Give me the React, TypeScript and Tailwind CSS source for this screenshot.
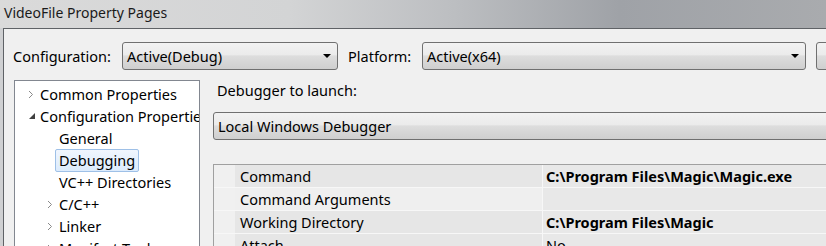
import React from "react";

const Arrow = () => (
  <svg width="9" height="5" viewBox="0 0 9 5" className="shrink-0">
    <path d="M0 0 H8 L4 4 Z" fill="#000" />
  </svg>
);

const Combo = ({ text, className }: { text: string; className: string }) => (
  <div
    className={`flex items-center justify-between rounded-[3px] border border-[#707070] bg-[linear-gradient(#f2f2f2_0%,#ebebeb_45%,#dddddd_50%,#cfcfcf_100%)] pl-[4px] pr-[5px] ${className}`}
  >
    <span className="text-[14.5px] leading-none text-[#000]">{text}</span>
    <Arrow />
  </div>
);

const Chevron = () => (
  <svg width="6" height="9" viewBox="0 0 6 9" className="shrink-0">
    <path d="M1 1 L4.5 4.5 L1 8" fill="none" stroke="#8a8a8a" strokeWidth="1" />
  </svg>
);

const Expanded = () => (
  <svg width="8" height="8" viewBox="0 0 8 8" className="shrink-0">
    <path d="M7 1 L7 7 L1 7 Z" fill="#404040" />
  </svg>
);

type TreeItem = { label: string; indent: number; icon?: "c" | "e"; selected?: boolean };

const tree: TreeItem[] = [
  { label: "Common Properties", indent: 0, icon: "c" },
  { label: "Configuration Properties", indent: 0, icon: "e" },
  { label: "General", indent: 1 },
  { label: "Debugging", indent: 1, selected: true },
  { label: "VC++ Directories", indent: 1 },
  { label: "C/C++", indent: 1, icon: "c" },
  { label: "Linker", indent: 1, icon: "c" },
  { label: "Manifest Tool", indent: 1, icon: "c" },
];

const rows = [
  { name: "Command", value: "C:\\Program Files\\Magic\\Magic.exe", light: false },
  { name: "Command Arguments", value: "", light: true },
  { name: "Working Directory", value: "C:\\Program Files\\Magic", light: false },
  { name: "Attach", value: "No", light: false, normal: true },
];

export default function App() {
  return (
    <div
      className="relative h-[246px] w-[826px] overflow-hidden bg-[#c9cbcf] text-[#000]"
      style={{ fontFamily: '"Noto Sans", "Open Sans", sans-serif' }}
    >
      {/* title bar */}
      <div className="flex h-[28px] items-center bg-[linear-gradient(180deg,rgba(60,64,72,0)_0%,rgba(60,64,72,0)_100%),linear-gradient(90deg,#dadada_0%,#d3d4d5_35%,#bcbec1_55%,#9fa2a7_75%,#a9abae_100%)] pb-[3px] pl-[4px]">
        <span className="text-[14px] leading-none text-[#1a1a1a]">VideoFile Property Pages</span>
      </div>
      <div className="flex">
        <div className="w-[3px] shrink-0 bg-[#cfd0d2]" />
        <div className="h-[218px] flex-1 border-l border-t border-[#5f6266] bg-[#f0f0f0]">
          {/* top config row */}
          <div className="flex items-center pt-[13px]">
            <span className="w-[118px] shrink-0 pl-[9px] text-[14.5px] leading-none">Configuration:</span>
            <Combo text="Active(Debug)" className="h-[28px] w-[216px] shrink-0" />
            <span className="w-[84px] shrink-0 pl-[10px] text-[14.5px] leading-none">Platform:</span>
            <Combo text="Active(x64)" className="h-[28px] w-[384px] shrink-0" />
            <div className="ml-[10px] h-[28px] w-[30px] shrink-0 rounded-[3px] border border-[#707070] bg-[linear-gradient(#f2f2f2_0%,#ebebeb_45%,#dddddd_50%,#cfcfcf_100%)]" />
          </div>
          {/* body */}
          <div className="mt-[10px] flex">
            <div className="ml-[10px] h-[200px] w-[186px] shrink-0 overflow-hidden border border-[#828790] bg-white pt-[2px]">
              {tree.map((t) => (
                <div
                  key={t.label}
                  className="flex h-[22px] items-center whitespace-nowrap"
                  style={{ paddingLeft: t.indent ? 32 : 13 }}
                >
                  <div className="flex w-[12px] shrink-0 items-center">
                    {t.icon === "c" && <Chevron />}
                    {t.icon === "e" && <Expanded />}
                  </div>
                  {t.selected ? (
                    <span className="-ml-[4px] rounded-[2px] border border-[#9ec0e7] bg-[linear-gradient(#f0f6fe,#dcebfc)] px-[3px] py-[1px] text-[14.5px] leading-[19px]">
                      {t.label}
                    </span>
                  ) : (
                    <span className="text-[14.5px] leading-none">{t.label}</span>
                  )}
                </div>
              ))}
            </div>
            <div className="ml-[13px] flex-1">
              <div className="pl-[4px] pt-[1px] text-[14.5px] leading-[18px]">Debugger to launch:</div>
              <div className="mt-[13px] flex h-[28px] w-[640px] items-center rounded-[3px] border border-[#707070] bg-[linear-gradient(#f2f2f2_0%,#ebebeb_45%,#dddddd_50%,#cfcfcf_100%)] pl-[4px]">
                <span className="text-[14.5px] leading-none">Local Windows Debugger</span>
              </div>
              <div className="mt-[24px] w-[640px] border-l border-t border-[#a0a0a0]">
                {rows.map((r) => (
                  <div key={r.name} className="flex h-[23px] border-b border-[#f7f7f7]">
                    <div className="w-[21px] shrink-0 bg-[#f0f0f0]" />
                    <div
                      className={`flex w-[308px] shrink-0 items-center border-r border-[#f7f7f7] pl-[5px] text-[14.5px] leading-none ${
                        r.light ? "bg-[#efefef]" : "bg-[#e6e6e6]"
                      }`}
                    >
                      {r.name}
                    </div>
                    <div
                      className={`flex flex-1 items-center bg-[#e8e8e8] pl-[3px] text-[14.5px] leading-none ${
                        r.normal ? "" : "font-bold"
                      }`}
                    >
                      {r.value}
                    </div>
                  </div>
                ))}
              </div>
            </div>
          </div>
        </div>
      </div>
    </div>
  );
}
